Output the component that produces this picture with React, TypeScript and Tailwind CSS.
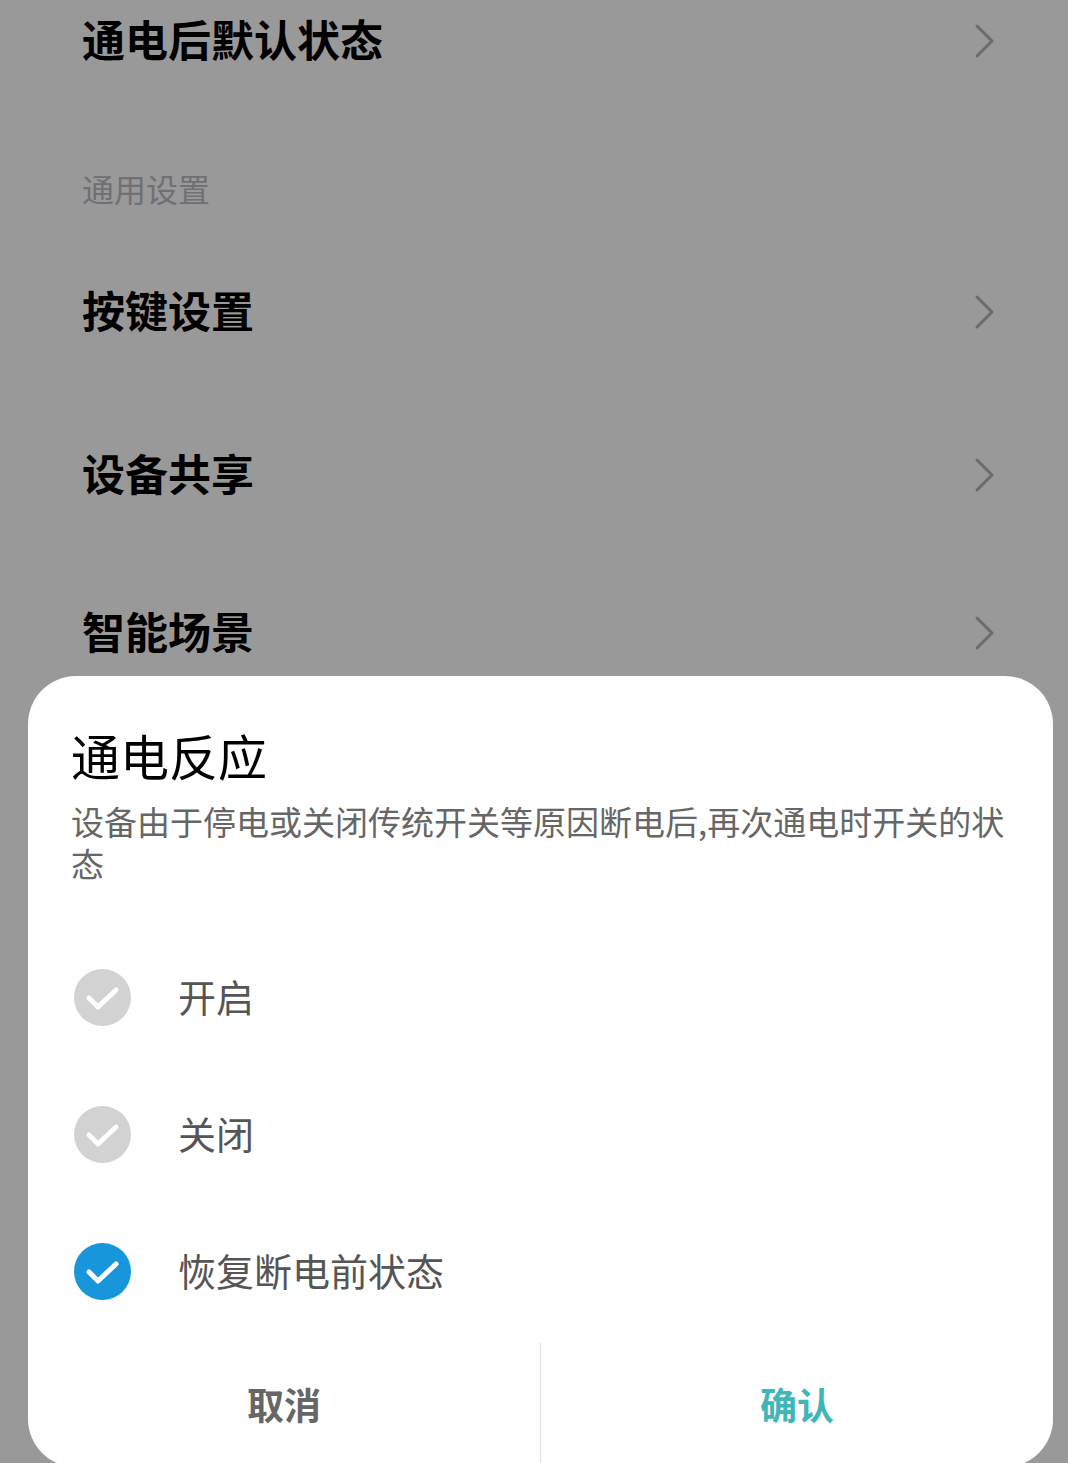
import React from "react";

const font = { fontFamily: '"Noto Sans CJK SC", "Noto Sans", sans-serif' };

function Chevron() {
  return (
    <svg width="22" height="36" viewBox="0 0 22 36" className="shrink-0 mt-[6px]">
      <path d="M3 3 L18 18 L3 33" fill="none" stroke="#6b6b6b" strokeWidth="3" strokeLinecap="round" strokeLinejoin="round" />
    </svg>
  );
}

function Row({ label, h }: { label: string; h: string }) {
  return (
    <div className={`flex items-center justify-between pl-[82px] pr-[72px] ${h}`}>
      <span className="text-[43px] leading-none font-bold text-black">{label}</span>
      <Chevron />
    </div>
  );
}

function Check({ on }: { on: boolean }) {
  return (
    <div className={`w-[57px] h-[57px] rounded-full flex items-center justify-center shrink-0 ${on ? "bg-[#1896dc]" : "bg-[#d2d2d2]"}`}>
      <svg width="40" height="30" viewBox="0 0 40 30">
        <path d="M6 15 L15 24 L33 7" fill="none" stroke="#fff" strokeWidth="5" strokeLinecap="round" strokeLinejoin="round" />
      </svg>
    </div>
  );
}

export default function App() {
  const opts = [
    { label: "开启", on: false },
    { label: "关闭", on: false },
    { label: "恢复断电前状态", on: true },
  ];
  return (
    <div className="relative w-[1068px] h-[1463px] overflow-hidden bg-[#999999]" style={font}>
      <div className="flex flex-col">
        <div className="h-[76px] flex items-center justify-between pl-[82px] pr-[72px]">
          <span className="text-[43px] leading-none font-bold text-black">通电后默认状态</span>
          <Chevron />
        </div>
        <div className="h-[150px] flex items-end pl-[82px] pb-[22px]">
          <span className="text-[32px] leading-none text-[#6f6f74]">通用设置</span>
        </div>
        <Row label="按键设置" h="h-[166px]" />
        <Row label="设备共享" h="h-[160px]" />
        <Row label="智能场景" h="h-[156px]" />
        <Row label="" h="h-[160px]" />
      </div>

      <div className="absolute left-[28px] top-[676px] w-[1025px] h-[791px] bg-white rounded-[48px] flex flex-col">
        <div className="pl-[43px] pt-[54px]">
          <div className="text-[49px] leading-none text-black h-[52px]">通电反应</div>
          <div className="mt-[18px] w-[940px] text-[33px] leading-[42px] text-[#666666]">
            设备由于停电或关闭传统开关等原因断电后,再次通电时开关的状态
          </div>
        </div>
        <div className="flex flex-col pl-[46px] mt-[45px]">
          {opts.map((o) => (
            <div key={o.label} className="h-[137px] flex items-center gap-[47px]">
              <Check on={o.on} />
              <span className="text-[38px] leading-none text-[#555555] mb-[4px]">{o.label}</span>
            </div>
          ))}
        </div>
        <div className="flex flex-1 mt-[3px]">
          <div className="flex-1 flex items-center justify-center text-[37px] font-bold text-[#666666] border-r border-[#e0e0e0]">
            取消
          </div>
          <div className="flex-1 flex items-center justify-center text-[37px] font-bold text-[#3fb6b8]">
            确认
          </div>
        </div>
      </div>
    </div>
  );
}
